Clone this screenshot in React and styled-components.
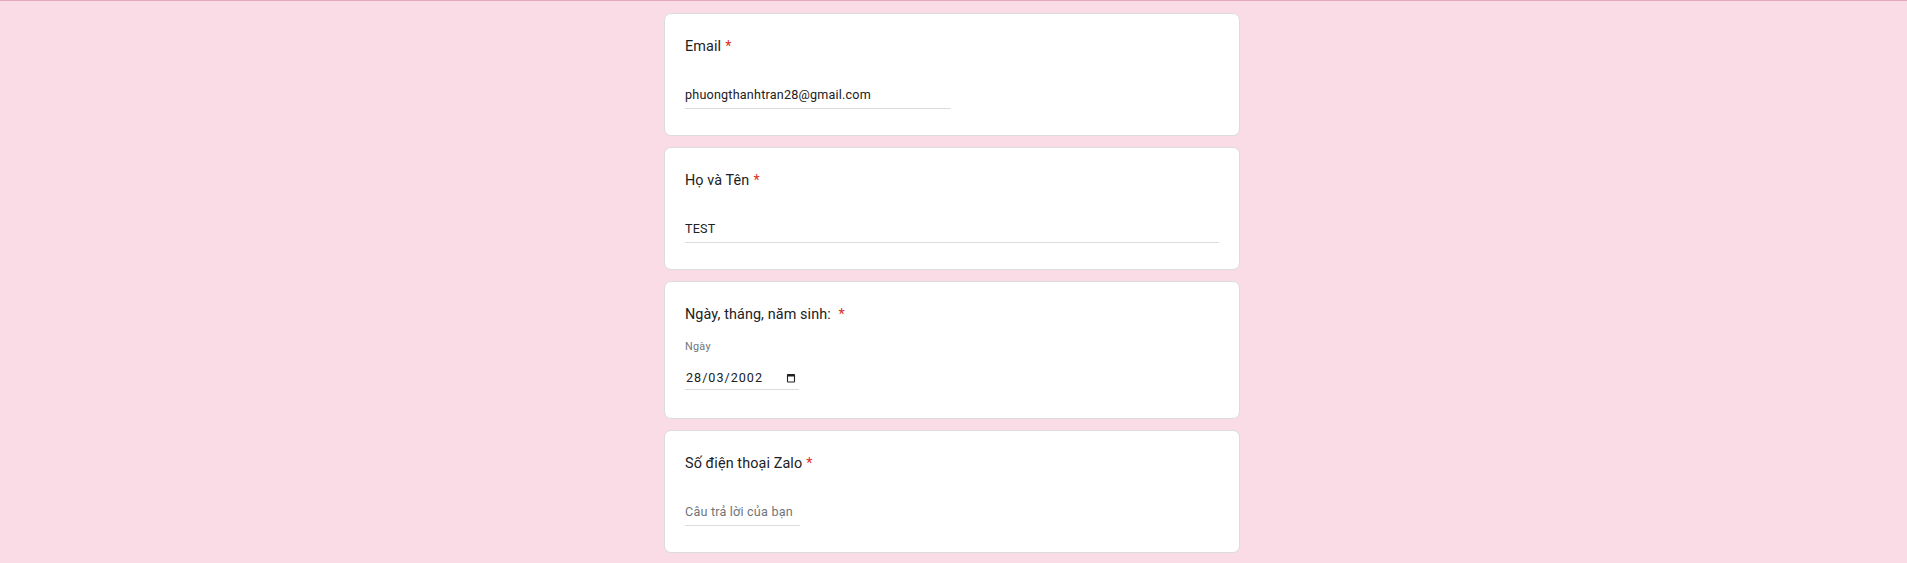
import styled, { createGlobalStyle } from 'styled-components'

const GlobalStyle = createGlobalStyle`
	html, body {
		margin: 0;
		padding: 0;
		background: #f9dce5;
	}
	body {
		font-family: Roboto, 'Noto Sans', Arial, sans-serif;
		color: #202124;
	}
`

const questions = [
	{ id: 'email', title: 'Email', kind: 'text', value: 'phuongthanhtran28@gmail.com', width: 266 },
	{ id: 'name', title: 'Họ và Tên', kind: 'text', value: 'TEST', width: null },
	{ id: 'dob', title: 'Ngày, tháng, năm sinh:\u00a0', kind: 'date', value: '28/03/2002' },
	{ id: 'phone', title: 'Số điện thoại Zalo', kind: 'text', value: '', width: 115 },
]

function CalendarIcon() {
	return (
		<svg width='10' height='10' viewBox='0 0 10 10' fill='none'>
			<rect x='1.5' y='1.5' width='7' height='7.5' rx='0.6' stroke='#202124' strokeWidth='1.1' />
			<rect x='1.5' y='1.5' width='7' height='2' fill='#202124' />
		</svg>
	)
}

export default function App() {
	return (
		<>
			<GlobalStyle />
			<TopLine />
			<Page>
				{questions.map((q) => (
					<Card key={q.id} $tall={q.kind === 'date'}>
						<Title>
							{q.title}
							<Required>*</Required>
						</Title>
						{q.kind === 'date' ? (
							<>
								<SubLabel>Ngày</SubLabel>
								<DateField>
									<DateText>{q.value}</DateText>
									<CalendarIcon />
								</DateField>
							</>
						) : (
							<Answer
								$width={q.width}
								defaultValue={q.value}
								placeholder='Câu trả lời của bạn'
							/>
						)}
					</Card>
				))}
			</Page>
		</>
	)
}

const TopLine = styled.div`
	height: 1px;
	background: #e3a8b7;
`

const Page = styled.main`
	display: flex;
	flex-direction: column;
	align-items: center;
	gap: 11px;
	padding: 12px 3px 20px 0;
`

const Card = styled.section`
	box-sizing: border-box;
	width: 576px;
	background: #ffffff;
	border: 1px solid #dadce0;
	border-radius: 7px;
	padding: 22px 20px ${(p) => (p.$tall ? '28px' : '26px')};
	display: flex;
	flex-direction: column;
	align-items: flex-start;
`

const Title = styled.div`
	font-size: 14.4px;
	line-height: 22px;
	letter-spacing: 0.1px;
	color: #202124;
	margin-bottom: 22px;
	white-space: pre;
`

const Required = styled.span`
	color: #d93025;
	margin-left: 4px;
`

const Answer = styled.input`
	box-sizing: border-box;
	display: block;
	width: ${(p) => (p.$width ? `${p.$width}px` : '100%')};
	height: 29px;
	margin: 0;
	padding: 6px 0 6px;
	border: none;
	border-bottom: 1px solid #dadce0;
	outline: none;
	background: transparent;
	font-family: Roboto, 'Noto Sans', Arial, sans-serif;
	font-size: 12.6px;
	letter-spacing: 0.2px;
	color: #202124;

	&::placeholder {
		color: #70757a;
	}
`

const SubLabel = styled.div`
	margin: -9px 0 6px;
	font-size: 10.8px;
	line-height: 16px;
	letter-spacing: 0.3px;
	color: #70757a;
`

const DateField = styled.div`
	box-sizing: border-box;
	width: 114px;
	height: 29px;
	display: flex;
	align-items: center;
	justify-content: space-between;
	padding: 5px 3px 0 1px;
	border-bottom: 1px solid #dadce0;
`

const DateText = styled.span`
	font-size: 12.6px;
	letter-spacing: 1px;
	color: #202124;
`
